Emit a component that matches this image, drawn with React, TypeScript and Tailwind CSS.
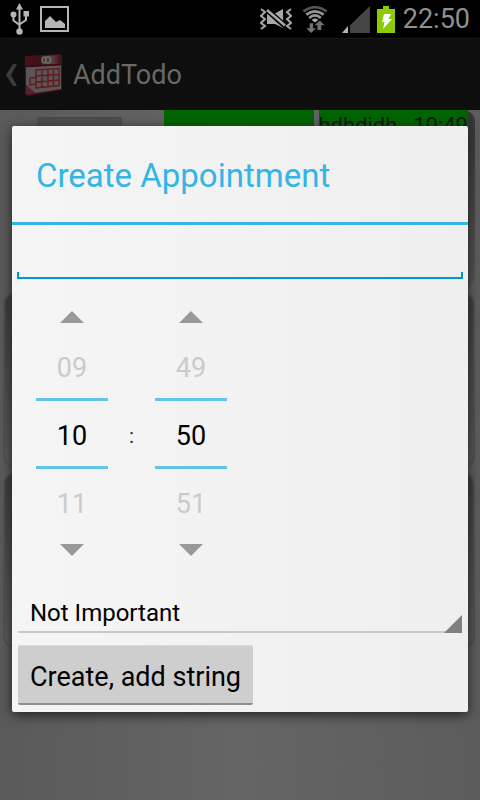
import { useState } from "react";

const pad = (n: number) => String(n).padStart(2, "0");

function StatusBar() {
  return (
    <header className="flex h-[38px] shrink-0 items-center justify-between bg-black pr-2.5 pl-2">
      <div className="flex items-center gap-2.5">
        <svg width="22" height="32" viewBox="0 0 22 32" fill="none" stroke="#b4b7b3" strokeWidth="2" aria-label="USB connected">
          <path d="M11.5 5v22M5.500 13v4.500L11.500 22M18 12v5l-6.500 4.500" />
          <path d="M11.500 0l3.500 6.500h-7zM15.500 8h5.500v5.500h-5.500z" fill="#b4b7b3" stroke="none" />
          <circle cx="5.500" cy="11.500" r="3" fill="#b4b7b3" stroke="none" />
          <circle cx="11.500" cy="28.500" r="3.200" fill="#b4b7b3" stroke="none" />
        </svg>
        <svg width="29" height="26" viewBox="0 0 29 26" aria-label="Picture saved">
          <rect x="1" y="1" width="27" height="24" fill="none" stroke="#b4b7b3" strokeWidth="2" />
          <path d="M5 22v-7l5-5 6 6 4-2 5 4v4z" fill="#b4b7b3" />
        </svg>
      </div>
      <div className="flex items-center">
        <svg width="32" height="22" viewBox="0 0 32 22" aria-label="Vibrate">
          <path d="M7 6l7 0 9 9v5l-8-4H7zM14 6l9-5v13z" fill="#a6a9a6" />
          <path d="M6 1l19 17" stroke="#000" strokeWidth="5.500" />
          <path d="M7 2l18 15.500" stroke="#a6a9a6" strokeWidth="2.500" />
          <path d="M1 1l4 3-4 4 4 3-4 4 4 3-4 3M31 1l-4 3 4 4-4 3 4 4-4 3 4 3" fill="none" stroke="#a6a9a6" strokeWidth="2" />
        </svg>
        <svg className="ml-2.5 pt-px" width="26" height="28" viewBox="0 0 26 28" aria-label="Wi-Fi">
          <g fill="none" strokeWidth="2.800">
            <path d="M1 5.500Q13-3 25 5.500" stroke="#555" />
            <path d="M4 9Q13 2 22 9" stroke="#969996" />
            <path d="M7 12.500Q13 7 19 12.500" stroke="#969996" />
          </g>
          <path d="M9.500 14.500Q13 11.500 16.500 14.500L13 17z" fill="#a6a9a6" />
          <path d="M7.500 18h3.500v5h3l-5 5-5-5h3.500zM15.500 25h4v-5h3.500l-5-5-5.500 5h3z" fill="#707270" />
        </svg>
        <svg className="ml-3.5" width="28" height="27" viewBox="0 0 28 27" aria-label="Signal strength">
          <path d="M28 0v27H0z" fill="#454545" />
          <path d="M6 20v7H0z" fill="#b4b7b3" />
          <path d="M7 18v9" stroke="#000" strokeWidth="2" />
        </svg>
        <svg className="ml-[7px]" width="18" height="27" viewBox="0 0 18 27" aria-label="Charging">
          <path d="M6 0h6v3h6v24H0V3h6z" fill="#8bcb04" />
          <path d="M7 8h7l-2.500 5h3.500L6 23l1.500-7H5z" fill="#fff" />
        </svg>
        <time className="ml-2 text-[27px] leading-8 text-[#8e918e]">22:50</time>
      </div>
    </header>
  );
}

function CalendarLogo() {
  return (
    <svg width="38" height="42" viewBox="0 0 38 42" aria-hidden="true">
      <defs>
        <linearGradient id="band" x1="0" x2="1">
          <stop offset="0" stopColor="#4c0f19" />
          <stop offset=".4" stopColor="#3d1218" />
          <stop offset=".7" stopColor="#574a4c" />
          <stop offset="1" stopColor="#480d17" />
        </linearGradient>
      </defs>
      <path d="M1 2L36 0Q38 0 38 2v34L4 42Q1 42 1 39z" fill="#491019" />
      <path d="M2 3L37 1v9L2 12z" fill="url(#band)" />
      <path d="M2 13L37 11v24L11 39 2 31z" fill="#585656" />
      <path d="M2 31l9 8-7 2-2-2z" fill="#5a2032" />
      <g fill="none" stroke="#651a1f" strokeWidth="1.500">
        <path d="M12 16l23-1.500v17L12 34zM12 22l23-1.500M6 24v7l6-1M6 24l6-.5M12 28l23-2M18 16v17M24 15.500v17M29.500 15v17" />
      </g>
      <path d="M2 12.500L37 10.500" stroke="#3a080e" strokeWidth="1.500" />
      <g fill="#484040" stroke="#6c6c6c" strokeWidth="1.500">
        <ellipse cx="20.500" cy="6" rx="2.500" ry="3" />
        <ellipse cx="24" cy="6" rx="2.500" ry="3" />
      </g>
    </svg>
  );
}

function ActionBar() {
  return (
    <nav className="flex h-[72px] shrink-0 items-center border-t border-[#161616] bg-[#0e0e0e] pl-1.5 shadow-[0_1px_3px_#222]">
      <button type="button" aria-label="Navigate up" className="flex items-center gap-[7px]">
        <svg width="11" height="22" viewBox="0 0 11 22" aria-hidden="true">
          <path d="M7 0h4L5 11l6 11H7L0 11z" fill="#3b3b3b" />
        </svg>
        <CalendarLogo />
      </button>
      <h1 className="ml-[11px] text-[27px] leading-8 text-[#686868]">AddTodo</h1>
    </nav>
  );
}

function Panel() {
  return (
    <div className="h-44 rounded-xl border-2 border-[#505050] bg-linear-to-b from-[#3b3b3b] to-[#5a5a5a]" />
  );
}

function Planner() {
  return (
    <main className="flex flex-1 flex-col gap-1 bg-linear-to-r from-[#5a5a5a] via-[#656565] to-[#5c5c5c] pr-[5px] pl-[3px]">
      <div className="flex h-[178px] overflow-hidden">
        <div className="flex w-[161px] justify-center pt-[7px] pr-2">
          <div className="h-12 w-[85px] rounded-xs border-t border-[#484848] bg-[#4e4e4e]" />
        </div>
        <div className="h-14 flex-1 bg-[#006400]" />
        <div className="ml-[5px] flex-1 rounded-xl bg-linear-to-b from-[#333] to-[#555] pr-[7px]">
          <div className="flex h-14 justify-between bg-[#006400] text-[22px] leading-8 text-[#101a10]">
            <span>hdhdjdh</span>
            <span>10:49</span>
          </div>
        </div>
      </div>
      <Panel />
      <Panel />
    </main>
  );
}

function NumberWheel({ label, initial, count }: { label: string; initial: number; count: number }) {
  const [value, setValue] = useState(initial);
  const prev = (value + count - 1) % count;
  const next = (value + 1) % count;
  return (
    <div className="flex w-[72px] flex-col items-center text-[27px] leading-8">
      <button type="button" aria-label={`Decrease ${label}`} onClick={() => setValue(prev)} className="flex h-12 w-full items-center justify-center">
        <svg width="24" height="12" viewBox="0 0 24 12" aria-hidden="true">
          <path d="M12 0l12 12H0z" fill="#999" />
        </svg>
      </button>
      <span className="flex h-[57px] items-center pb-1 text-[#cbcbcb]">{pad(prev)}</span>
      <input
        aria-label={label}
        value={pad(value)}
        onChange={(e) => setValue((Number(e.target.value) || 0) % count)}
        className="h-[71px] w-full border-y-3 border-[#61c5ea] bg-transparent pt-1 text-center text-black outline-none"
      />
      <span className="flex h-[57px] items-center pt-3 text-[#cbcbcb]">{pad(next)}</span>
      <button type="button" aria-label={`Increase ${label}`} onClick={() => setValue(next)} className="flex h-12 w-full items-center justify-center">
        <svg width="24" height="12" viewBox="0 0 24 12" aria-hidden="true">
          <path d="M0 0h24L12 12z" fill="#999" />
        </svg>
      </button>
    </div>
  );
}

function AppointmentDialog() {
  return (
    <form
      role="dialog"
      aria-labelledby="dialog-title"
      onSubmit={(e) => e.preventDefault()}
      className="w-full rounded-xs bg-linear-to-r from-[#f5f5f5] to-[#efefef] pb-[7px] shadow-[0_3px_12px_#222]"
    >
      <h2 id="dialog-title" className="flex h-[99px] items-center border-b-3 border-[#33b5e5] px-6 pt-1 text-[33px] leading-10 text-[#33b5e5]">
        Create Appointment
      </h2>
      <div className="px-[5px]">
        <div className="flex h-[54px] flex-col justify-end">
          <input aria-label="Appointment name" className="h-12 w-full bg-transparent px-3 text-[27px] text-black outline-none" />
          <div className="h-[7px] shrink-0 border-x-2 border-b-2 border-[#0099cc]" />
        </div>
      </div>
      <div className="flex items-center px-6 pt-3.5 pb-4">
        <NumberWheel label="hour" initial={10} count={24} />
        <span className="w-[47px] pt-1 text-center text-[21px] leading-8 text-[#333]">:</span>
        <NumberWheel label="minute" initial={50} count={60} />
      </div>
      <div className="px-1.5">
        <div className="relative">
          <select aria-label="Importance" className="h-[43px] w-full appearance-none border-b-2 border-[#c8c8c8] bg-transparent px-3 pt-1 text-2xl text-black outline-none">
            <option>Not Important</option>
            <option>Important</option>
          </select>
          <svg className="pointer-events-none absolute right-0 bottom-0" width="18" height="18" viewBox="0 0 18 18" aria-hidden="true">
            <path d="M18 0v18H0z" fill="#808080" />
          </svg>
        </div>
        <button type="submit" className="mt-3 block h-[60px] rounded-xs border-t border-b-2 border-t-[#dadada] border-b-[#8e8e8e] bg-[#cecece] px-3 pt-1 text-[27px] leading-8 text-black">
          Create, add string
        </button>
      </div>
    </form>
  );
}

export default function App() {
  return (
    <div className="relative flex min-h-screen flex-col font-[Roboto,sans-serif]">
      <StatusBar />
      <ActionBar />
      <Planner />
      <div className="absolute inset-x-0 top-[38px] bottom-0 flex items-center px-3">
        <AppointmentDialog />
      </div>
    </div>
  );
}
